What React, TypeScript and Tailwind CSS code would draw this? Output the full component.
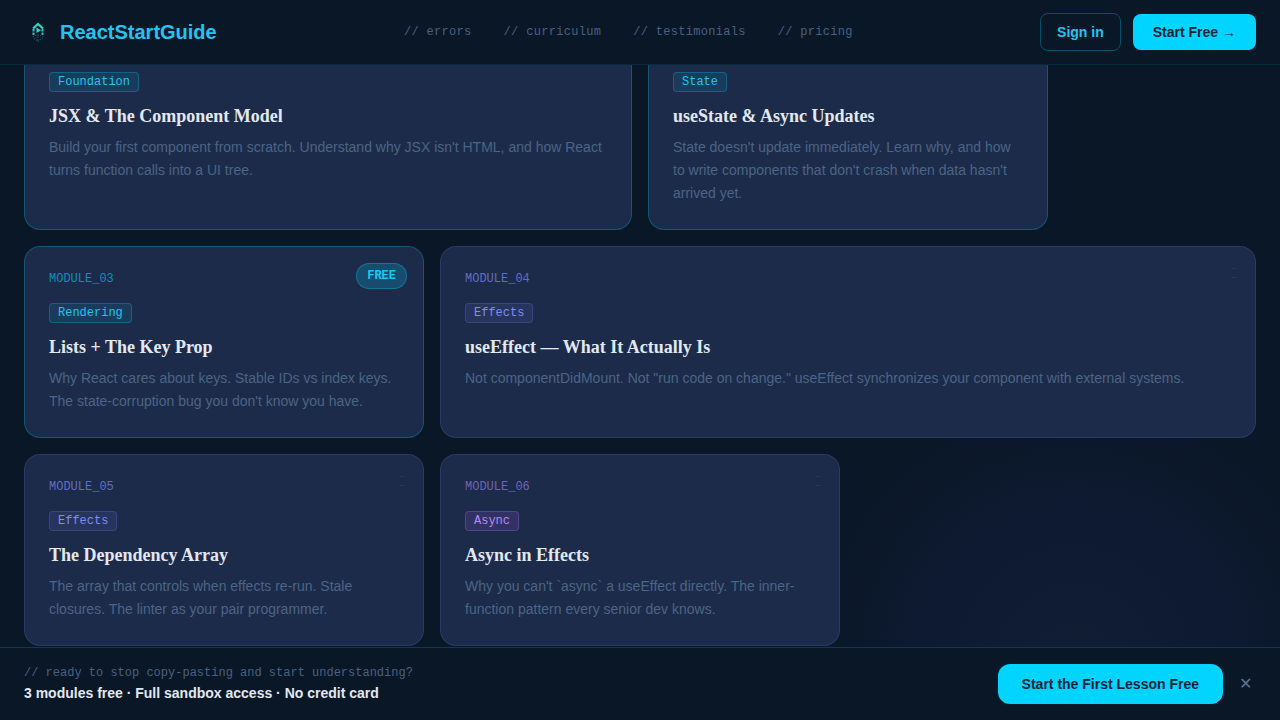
import { useState } from 'react';

const navItems = ['errors', 'curriculum', 'testimonials', 'pricing'];

const tones = {
  cyan: {
    label: 'text-[#00d4ff]/60',
    tag: 'text-[#22c3ee] bg-[#00d4ff]/10 border-[#00d4ff]/25',
  },
  indigo: {
    label: 'text-[#818cf8]/70',
    tag: 'text-[#818cf8] bg-[#818cf8]/10 border-[#818cf8]/20',
  },
  purple: {
    label: 'text-[#a78bfa]/60',
    tag: 'text-[#b58af5] bg-[#a855f7]/15 border-[#a78bfa]/25',
  },
};

type Module = {
  id: string;
  tag: string;
  title: string;
  description: string;
  tone: keyof typeof tones;
  free: boolean;
  span: string;
};

const modules: Module[] = [
  {
    id: 'MODULE_01',
    tag: 'Foundation',
    title: 'JSX & The Component Model',
    description:
      "Build your first component from scratch. Understand why JSX isn't HTML, and how React turns function calls into a UI tree.",
    tone: 'cyan',
    free: true,
    span: 'md:col-span-6',
  },
  {
    id: 'MODULE_02',
    tag: 'State',
    title: 'useState & Async Updates',
    description:
      "State doesn't update immediately. Learn why, and how to write components that don't crash when data hasn't arrived yet.",
    tone: 'cyan',
    free: true,
    span: 'md:col-span-4',
  },
  {
    id: 'MODULE_03',
    tag: 'Rendering',
    title: 'Lists + The Key Prop',
    description:
      "Why React cares about keys. Stable IDs vs index keys. The state-corruption bug you don't know you have.",
    tone: 'cyan',
    free: true,
    span: 'md:col-span-4',
  },
  {
    id: 'MODULE_04',
    tag: 'Effects',
    title: 'useEffect — What It Actually Is',
    description:
      'Not componentDidMount. Not "run code on change." useEffect synchronizes your component with external systems.',
    tone: 'indigo',
    free: false,
    span: 'md:col-span-8',
  },
  {
    id: 'MODULE_05',
    tag: 'Effects',
    title: 'The Dependency Array',
    description:
      'The array that controls when effects re-run. Stale closures. The linter as your pair programmer.',
    tone: 'indigo',
    free: false,
    span: 'md:col-span-4',
  },
  {
    id: 'MODULE_06',
    tag: 'Async',
    title: 'Async in Effects',
    description:
      "Why you can't `async` a useEffect directly. The inner-function pattern every senior dev knows.",
    tone: 'purple',
    free: false,
    span: 'md:col-span-4',
  },
];

function Logo() {
  return (
    <svg width="28" height="28" viewBox="0 0 28 28" fill="none" aria-hidden="true">
      <path d="M9 10.500 14 6l5 4.500" stroke="#2dd4bf" strokeWidth="2.200" />
      <path d="M9.500 11v2.500M9.500 14.500v2.500M18.500 11v2.500M18.500 14.500v2.500" stroke="#25c5cc" strokeWidth="2" />
      <path d="M12.500 9.500v5.500l4.500-2.750z" fill="#2dd4bf" />
      <path
        d="M9.500 18v2l4.500 3.500 4.500-3.500v-2M11 17.500h6M14 16v7"
        stroke="#1c6f80"
        strokeOpacity="0.6"
        strokeWidth="1.200"
        strokeDasharray="1.500 1"
      />
    </svg>
  );
}

function Header() {
  return (
    <header className="fixed inset-x-0 top-0 z-50 border-b border-[#00d4ff]/10 bg-[#0a1727]">
      <div className="flex h-16 items-center justify-between px-6">
        <a href="#top" className="flex items-center gap-2 text-xl font-bold text-[#22c3ee]">
          <Logo />
          ReactStartGuide
        </a>

        <nav className="hidden items-center gap-8 md:flex">
          {navItems.map((item) => (
            <a
              key={item}
              href={`#${item}`}
              className="font-['Liberation_Mono',monospace] text-xs tracking-wide text-[#4a6080] transition-colors hover:text-[#00d4ff]"
            >
              // {item}
            </a>
          ))}
        </nav>

        <div className="flex items-center gap-3">
          <button className="rounded-lg border border-[#00d4ff]/30 px-4 py-2 text-sm font-bold text-[#22c3ee]">
            Sign in
          </button>
          <button className="rounded-lg bg-[#00d4ff] px-5 py-2 text-sm font-bold text-[#0a2238]">
            Start Free →
          </button>
        </div>
      </div>
    </header>
  );
}

function ModuleCard({ module }: { module: Module }) {
  const tone = tones[module.tone];

  return (
    <article
      className={`relative flex flex-col items-start rounded-2xl border bg-[#1d2b4a] p-6 ${module.span} ${
        module.free ? 'border-[#00d4ff]/25' : 'border-[#818cf8]/15'
      }`}
    >
      {module.free ? (
        <span className="absolute top-4 right-4 rounded-full border border-[#00d4ff]/30 bg-[#00d4ff]/20 px-2.5 py-1 font-['Liberation_Mono',monospace] text-xs font-bold text-[#12c9f5]">
          FREE
        </span>
      ) : (
        <svg className="absolute top-5 right-4 opacity-10" width="8" height="12" viewBox="0 0 8 12" fill="none">
          <path d="M1 1.500h5M1 10.500h5" stroke="#818cf8" />
        </svg>
      )}
      <span className={`mb-4 font-['Liberation_Mono',monospace] text-xs ${tone.label}`}>{module.id}</span>
      <span
        className={`mb-3 rounded border px-2 py-px font-['Liberation_Mono',monospace] text-xs ${tone.tag}`}
      >
        {module.tag}
      </span>
      <h3 className="mb-2 font-['Liberation_Serif',serif] text-lg leading-6 font-bold text-[#e2e8f0]">
        {module.title}
      </h3>
      <p className="text-sm leading-[23px] text-[#4a6585]">{module.description}</p>
    </article>
  );
}

function StickyBar({ onClose }: { onClose: () => void }) {
  return (
    <aside className="fixed inset-x-0 bottom-0 z-40 border-t border-[#00d4ff]/20 bg-[#0a1727]">
      <div className="flex items-center justify-between px-6 py-4">
        <div>
          <p className="font-['Liberation_Mono',monospace] text-xs text-[#4a6080]">
            // ready to stop copy-pasting and start understanding?
          </p>
          <p className="mt-0.5 text-sm font-bold text-[#e2e8f0]">
            3 modules free · Full sandbox access · No credit card
          </p>
        </div>
        <div className="flex items-center gap-3">
          <button className="rounded-xl bg-[#00d4ff] px-6 py-2.5 text-sm font-bold text-[#0a2238]">
            Start the First Lesson Free
          </button>
          <button aria-label="Close" onClick={onClose} className="px-1 text-base text-[#64748b]">
            ✕
          </button>
        </div>
      </div>
    </aside>
  );
}

export default function App() {
  const [showBar, setShowBar] = useState(true);

  return (
    <div
      id="top"
      className="min-h-screen bg-[#0a1727] bg-[radial-gradient(circle_at_84%_92%,#111d33_0px,#0e1a31_150px,#0a1727_260px)] font-['Liberation_Sans',sans-serif]"
    >
      <Header />
      <main className="px-6 pt-[15px]">
        <section id="curriculum" className="grid grid-cols-1 gap-4 md:grid-cols-12">
          {modules.map((module) => (
            <ModuleCard key={module.id} module={module} />
          ))}
        </section>
      </main>
      {showBar && <StickyBar onClose={() => setShowBar(false)} />}
    </div>
  );
}
